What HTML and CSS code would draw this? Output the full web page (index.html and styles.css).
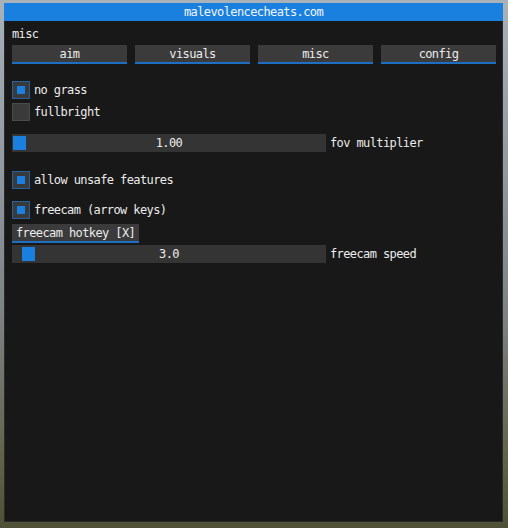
FILE: index.html
```html
<!DOCTYPE html>
<html>
<head>
<meta charset="utf-8">
<title>malevolencecheats.com</title>
<link rel="stylesheet" href="styles.css">
</head>
<body>
<div class="window">
  <div class="titlebar">malevolencecheats.com</div>
  <div class="content">
    <div class="label">misc</div>
    <div class="tabs">
      <div class="btn">aim</div>
      <div class="btn">visuals</div>
      <div class="btn">misc</div>
      <div class="btn">config</div>
    </div>

    <div class="check first"><span class="box on"></span><span>no grass</span></div>
    <div class="check next"><span class="box"></span><span>fullbright</span></div>

    <div class="slider-row fov">
      <div class="slider"><span class="grab" style="left:1px"></span><span class="val">1.00</span></div>
      <span>fov multiplier</span>
    </div>

    <div class="check unsafe"><span class="box on"></span><span>allow unsafe features</span></div>
    <div class="check freecam"><span class="box on"></span><span>freecam (arrow keys)</span></div>

    <div class="btn hotkey">freecam hotkey [X]</div>

    <div class="slider-row speed">
      <div class="slider"><span class="grab" style="left:10px"></span><span class="val">3.0</span></div>
      <span>freecam speed</span>
    </div>
  </div>
</div>
</body>
</html>
```

FILE: styles.css
```css
html, body {
  margin: 0;
  height: 100%;
}

body {
  background: linear-gradient(180deg, #a9b1b9 0%, #8f969c 35%, #7d8183 60%, #62654c 85%, #4e5135 100%);
  padding: 3px 5px 6px 4px;
  box-sizing: border-box;
  font-family: "DejaVu Sans Mono", "Liberation Mono", monospace;
  font-size: 12px;
  letter-spacing: -0.6px;
  color: #ececec;
  white-space: nowrap;
}

.window {
  height: 519px;
  width: 499px;
  background: #181818;
  border: 1px solid #2a2a2a;
  border-top: none;
  box-sizing: border-box;
  display: flex;
  flex-direction: column;
}

.titlebar {
  height: 18px;
  margin: 0 -1px;
  background: #1a80e0;
  color: #f2f6fa;
  text-align: center;
  line-height: 18px;
}

.content {
  padding: 7px 6px 0 7px;
  display: flex;
  flex-direction: column;
  align-items: flex-start;
}

.label {
  line-height: 13px;
  height: 13px;
  margin-bottom: 4px;
}

.tabs {
  display: grid;
  grid-template-columns: repeat(4, 115px);
  column-gap: 8px;
  width: 484px;
}

.btn {
  height: 17px;
  line-height: 18px;
  background: #3b3b3b;
  border-bottom: 2px solid #1c6fc2;
  text-align: center;
}

.check {
  display: flex;
  align-items: center;
  gap: 4px;
  height: 18px;
}

.check.first { margin-top: 17px; }
.check.next { margin-top: 4px; }
.check.unsafe { margin-top: 19px; }
.check.freecam { margin-top: 12px; }

.box {
  width: 18px;
  height: 18px;
  box-sizing: border-box;
  background: #3a3a3a;
  border: 1px solid #4a4a4a;
  display: flex;
  align-items: center;
  justify-content: center;
}

.box.on {
  border-color: #24609c;
}

.box.on::after {
  content: "";
  width: 8px;
  height: 8px;
  background: #1a80e0;
}

.slider-row {
  display: flex;
  align-items: center;
  gap: 4px;
  height: 18px;
}

.slider-row.fov { margin-top: 13px; }
.slider-row.speed { margin-top: 2px; }

.slider {
  position: relative;
  width: 314px;
  height: 18px;
  background: #343434;
  text-align: center;
  line-height: 18px;
}

.grab {
  position: absolute;
  top: 2px;
  width: 13px;
  height: 14px;
  background: #1a80e0;
}

.val {
  position: relative;
}

.hotkey {
  margin-top: 5px;
  padding: 0 4px;
  width: 119px;
  text-align: left;
}
```
